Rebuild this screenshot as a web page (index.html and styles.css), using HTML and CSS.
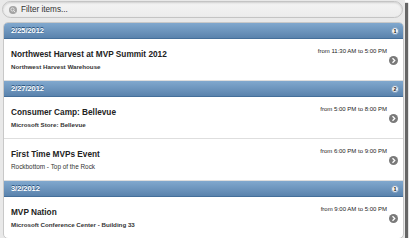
FILE: index.html
```html
<!DOCTYPE html>
<html lang="en">

<head>
    <meta charset="UTF-8">
    <meta name="viewport" content="width=device-width, initial-scale=1.0">
    <link rel="stylesheet" href="styles.css">
    <title>MVP Events</title>
</head>

<body>
    <div class="shot">
        <!-- Filter bar -->
        <div class="filter">
            <svg class="search-icon" width="8" height="8" viewBox="0 0 16 16">
                <circle cx="8" cy="8" r="8" fill="#a3a3a3"/>
                <circle cx="7" cy="7" r="3.2" fill="none" stroke="#e8e8e8" stroke-width="1.8"/>
                <line x1="9.3" y1="9.3" x2="12" y2="12" stroke="#e8e8e8" stroke-width="2" stroke-linecap="round"/>
            </svg>
            <input type="text" class="filter-input" placeholder="Filter items...">
        </div>

        <!-- Event list -->
        <ul class="events">
            <li class="divider">
                <span>2/25/2012</span>
                <span class="count">1</span>
            </li>
            <li class="event">
                <div class="event-text">
                    <h3>Northwest Harvest at MVP Summit 2012</h3>
                    <p>Northwest Harvest Warehouse</p>
                </div>
                <span class="event-time">from 11:30 AM to 5:00 PM</span>
                <span class="arrow"><svg width="9" height="9" viewBox="0 0 18 18"><circle cx="9" cy="9" r="9" fill="#7a7a7a"/><path d="M7 4.5 L11.5 9 L7 13.5" fill="none" stroke="#fff" stroke-width="2.6"/></svg></span>
            </li>

            <li class="divider">
                <span>2/27/2012</span>
                <span class="count">2</span>
            </li>
            <li class="event">
                <div class="event-text">
                    <h3>Consumer Camp: Bellevue</h3>
                    <p>Microsoft Store: Bellevue</p>
                </div>
                <span class="event-time">from 5:00 PM to 8:00 PM</span>
                <span class="arrow"><svg width="9" height="9" viewBox="0 0 18 18"><circle cx="9" cy="9" r="9" fill="#7a7a7a"/><path d="M7 4.5 L11.5 9 L7 13.5" fill="none" stroke="#fff" stroke-width="2.6"/></svg></span>
            </li>
            <li class="event">
                <div class="event-text">
                    <h3>First Time MVPs Event</h3>
                    <p class="plain">Rockbottom - Top of the Rock</p>
                </div>
                <span class="event-time">from 6:00 PM to 9:00 PM</span>
                <span class="arrow"><svg width="9" height="9" viewBox="0 0 18 18"><circle cx="9" cy="9" r="9" fill="#7a7a7a"/><path d="M7 4.5 L11.5 9 L7 13.5" fill="none" stroke="#fff" stroke-width="2.6"/></svg></span>
            </li>

            <li class="divider">
                <span>3/2/2012</span>
                <span class="count">1</span>
            </li>
            <li class="event last">
                <div class="event-text">
                    <h3>MVP Nation</h3>
                    <p>Microsoft Conference Center - Building 33</p>
                </div>
                <span class="event-time">from 9:00 AM to 5:00 PM</span>
                <span class="arrow"><svg width="9" height="9" viewBox="0 0 18 18"><circle cx="9" cy="9" r="9" fill="#7a7a7a"/><path d="M7 4.5 L11.5 9 L7 13.5" fill="none" stroke="#fff" stroke-width="2.6"/></svg></span>
            </li>
        </ul>
    </div>
</body>

</html>
```

FILE: styles.css
```css
body {
    margin: 0;
    padding: 0;
    background: #fff;
    font-family: 'Liberation Sans', Arial, sans-serif;
    color: #222;
}

.shot {
    width: 405px;
    height: 238px;
    box-sizing: border-box;
    padding: 1px 1px 0 3px;
    background: #e9e9e9;
    box-shadow: 3px 3px 1px rgba(0, 0, 0, 0.6);
}

/* Filter bar */
.filter {
    display: flex;
    align-items: center;
    height: 17px;
    margin: 0 1px 0 -1px;
    padding: 0 6px;
    box-sizing: border-box;
    border: 1px solid #c4c4c4;
    border-radius: 9px;
    background: linear-gradient(#f4f4f4, #ececec);
    box-shadow: inset 0 1px 2px rgba(0, 0, 0, 0.15);
}

.search-icon {
    flex: none;
    margin-right: 4px;
}

.filter-input {
    flex: 1;
    border: none;
    background: transparent;
    padding: 0;
    font-family: 'Liberation Sans', Arial, sans-serif;
    font-size: 8.2px;
    color: #333;
    outline: none;
}

.filter-input::placeholder {
    color: #333;
}

/* Event list */
.events {
    list-style: none;
    margin: 4px 0 0 0;
    padding: 0;
    border: 1px solid #c8c8c8;
    border-radius: 5px;
    background: #fff;
    overflow: hidden;
}

.divider {
    display: flex;
    align-items: center;
    justify-content: space-between;
    height: 16px;
    box-sizing: border-box;
    padding: 0 4px 0 7px;
    border-top: 1px solid #456f9a;
    border-bottom: 1px solid #456f9a;
    background: linear-gradient(#81a8ce, #5a83ad);
    color: #fff;
    font-size: 7.4px;
    font-weight: bold;
    text-shadow: 0 -1px 0 #254f7a;
}

.events > .divider:first-child {
    border-top: none;
}

.count {
    display: flex;
    align-items: center;
    justify-content: center;
    width: 8px;
    height: 8px;
    border-radius: 50%;
    background: #f2f2f2;
    border: 1px solid #7a9cbf;
    box-sizing: border-box;
    color: #222;
    font-size: 5.5px;
    text-shadow: none;
}

.event {
    display: grid;
    grid-template-columns: 1fr auto 9px;
    column-gap: 2px;
    height: 42px;
    box-sizing: border-box;
    padding: 0 5px 0 7px;
    border-bottom: 1px solid #dedede;
}

.event.last {
    height: 41px;
    border-bottom: none;
}

.event + .divider {
    border-top: none;
}

.event-text {
    align-self: center;
    padding-top: 1px;
}

.event-text h3 {
    margin: 0 0 3px 0;
    font-size: 8.25px;
    line-height: 10px;
    font-weight: bold;
    color: #222;
}

.event-text p {
    margin: 0;
    font-size: 6.2px;
    line-height: 8px;
    font-weight: bold;
    color: #333;
}

.event-text p.plain {
    font-weight: normal;
    font-size: 6.4px;
}

.event-time {
    align-self: start;
    margin-top: 9px;
    font-size: 6px;
    line-height: 7px;
    color: #222;
}

.arrow {
    align-self: center;
    display: flex;
    margin-top: 1px;
}
```
